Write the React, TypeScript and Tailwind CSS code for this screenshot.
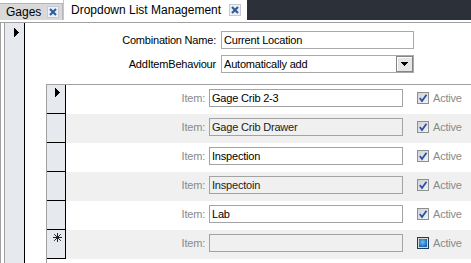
const rows = [
  { value: "Gage Crib 2-3", alt: false, current: true },
  { value: "Gage Crib Drawer", alt: true },
  { value: "Inspection", alt: false },
  { value: "Inspectoin", alt: true },
  { value: "Lab", alt: false },
  { value: "", alt: true, isNew: true },
];

function CloseBox() {
  return (
    <svg width="12" height="12" viewBox="0 0 12 12" className="shrink-0">
      <rect x="0.5" y="0.5" width="11" height="11" fill="#edf1f7" stroke="#c3cad5" />
      <path d="M3 3 L9 9 M9 3 L3 9" stroke="#2f5d9b" strokeWidth="2.2" />
    </svg>
  );
}

function Marker() {
  return (
    <svg width="6" height="9" viewBox="0 0 6 9" shapeRendering="crispEdges">
      <polygon points="0,0 5.5,4.5 0,9" fill="#000" />
    </svg>
  );
}

function NewMarker() {
  return (
    <svg width="9" height="9" viewBox="0 0 9 9">
      <path d="M4.5 0 V9 M0 4.5 H9 M1.2 1.2 L7.8 7.8 M7.8 1.2 L1.2 7.8" stroke="#222" strokeWidth="1" />
      <circle cx="4.5" cy="4.5" r="1.6" fill="#222" />
    </svg>
  );
}

function CheckBox({ blank }: { blank?: boolean }) {
  if (blank) {
    return (
      <svg width="12" height="12" viewBox="0 0 12 12" className="shrink-0">
        <defs>
          <radialGradient id="nb" cx="0.45" cy="0.4" r="0.6">
            <stop offset="0" stopColor="#6fc0f2" />
            <stop offset="1" stopColor="#1d68b2" />
          </radialGradient>
        </defs>
        <rect x="0.5" y="0.5" width="11" height="11" fill="#d8d8d8" stroke="#1e3b5c" />
        <rect x="2" y="2" width="8" height="8" fill="url(#nb)" />
      </svg>
    );
  }
  return (
    <svg width="12" height="12" viewBox="0 0 12 12" className="shrink-0">
      <defs>
        <linearGradient id="cb" x1="0" y1="0" x2="1" y2="1">
          <stop offset="0" stopColor="#cfd0d4" />
          <stop offset="1" stopColor="#f5f5f5" />
        </linearGradient>
      </defs>
      <rect x="0.5" y="0.5" width="11" height="11" fill="url(#cb)" stroke="#8e8f8f" />
      <path d="M2.8 6 L5 9 L9.5 2.8" stroke="#2b4fa6" strokeWidth="1.8" fill="none" />
    </svg>
  );
}

export default function App() {
  return (
    <div className="flex h-[263px] w-[471px] flex-col overflow-hidden bg-white font-['Liberation_Sans',Arial,sans-serif] text-black">
      {/* tab strip */}
      <div className="flex h-[20px] shrink-0">
        <div className="mt-[3px] flex h-[17px] w-[63px] items-center justify-between border-r border-t border-[#b4b4b4] bg-[#d9d9d9] pl-[6px] pr-[3px] text-[12px] leading-none">
          <span>Gages</span>
          <CloseBox />
        </div>
        <div className="flex h-[20px] w-[184px] items-center justify-between border-l border-[#c8c8c8] bg-white pl-[7px] pr-[6px] text-[12px] leading-none">
          <span>Dropdown List Management</span>
          <CloseBox />
        </div>
        <div className="flex-1 bg-[#2c3038]" />
      </div>
      <div className="h-[2px] shrink-0" />

      {/* form panel */}
      <div className="flex flex-1 border-t border-[#a0a0a0]">
        <div className="w-px bg-[#a0a0a0]" />
        <div className="w-[3px]" />
        <div className="w-px bg-[#a0a0a0]" />
        <div className="w-[20px] border-r border-black bg-[#e6e9ee] pl-[9px] pt-[5px]">
          <Marker />
        </div>

        <div className="flex flex-1 flex-col text-[11px] tracking-[-0.2px]">
          <div className="mt-[8px] flex h-[18px] items-center">
            <div className="w-[191px] text-right">Combination Name:</div>
            <div className="ml-[5px] flex h-[18px] w-[193px] items-center border border-[#a9a9a9] bg-white pl-[2px]">
              Current Location
            </div>
          </div>
          <div className="mt-[6px] flex h-[18px] items-center">
            <div className="w-[191px] text-right">AddItemBehaviour</div>
            <div className="ml-[5px] flex h-[18px] w-[193px] border border-[#a9a9a9] bg-white">
              <div className="flex flex-1 items-center pl-[2px]">Automatically add</div>
              <div className="flex w-[17px] items-center justify-center border border-[#858585] bg-[#e6e6e6] shadow-[inset_1px_1px_0_#ffffff]">
                <svg width="7" height="4" viewBox="0 0 7 4" shapeRendering="crispEdges">
                  <polygon points="0,0 7,0 3.5,4" fill="#000" />
                </svg>
              </div>
            </div>
          </div>

          {/* subform */}
          <div className="ml-[21px] mt-[11px] flex flex-1 flex-col border-l border-t border-[#a0a0a0]">
            {rows.map((row, i) => (
              <div key={i} className="flex h-[29px]">
                <div className="w-[19px] border-b border-r border-black bg-[#e6e9ee] pt-[3px]">
                  {row.current ? (
                    <div className="pl-[8px]">
                      <Marker />
                    </div>
                  ) : null}
                  {row.isNew ? (
                    <div className="pl-[6px]">
                      <NewMarker />
                    </div>
                  ) : null}
                </div>
                <div className={`flex flex-1 items-start pt-[4px] ${row.alt ? "bg-[#f0f0f0]" : "bg-white"}`}>
                  <div className="flex h-[18px] items-center">
                    <div className="w-[139px] text-right text-[#8a8a8a]">Item:</div>
                    <div
                      className={`ml-[4px] flex h-[18px] w-[194px] items-center border border-[#a3a3a3] pl-[2px] ${
                        row.alt ? "bg-[#f0f0f0] text-[#222]" : "bg-white"
                      }`}
                    >
                      {row.value}
                    </div>
                    <div className="ml-[14px] flex items-center">
                      <CheckBox blank={row.isNew} />
                      <span className="ml-[4px] text-[#8a8a8a]">Active</span>
                    </div>
                  </div>
                </div>
              </div>
            ))}
          </div>
        </div>
      </div>
    </div>
  );
}
